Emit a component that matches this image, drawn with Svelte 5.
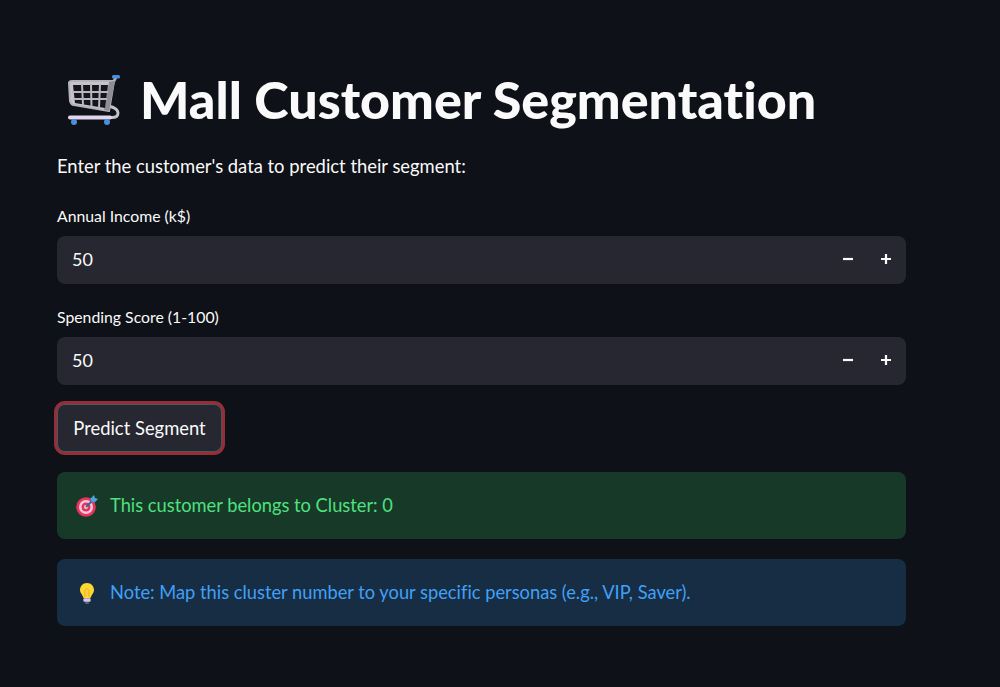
<script>
  const inputs = [
    { label: 'Annual Income (k$)', value: 50 },
    { label: 'Spending Score (1-100)', value: 50 }
  ];
</script>

<main class="page">
  <h1>
    <svg class="cart" viewBox="0 0 58 54" width="58" height="54" aria-hidden="true">
      <path d="M49 11 L52 5" stroke="#a9a7ae" stroke-width="3" fill="none"/>
      <rect x="48" y="3" width="8" height="3.500" rx="1.500" fill="#4a90d9"/>
      <path d="M44 34 Q54 36 54 41 Q54 46 47 45.500" stroke="#c4c2c8" stroke-width="3" fill="none"/>
      <path d="M5 11 Q5 9 8 9 L50 9 L45 39 L10 33 Q7 33 6 29 Z" fill="#c6c4ca" stroke="#b5b3ba" stroke-width="2" stroke-linejoin="round"/>
      <path d="M45 10 L51 9 L45 39 L40 38 Z" fill="#8e8c94"/>
      <path d="M9 13 L44 13 L41 36 L11 31 Z" fill="#15151c"/>
      <path d="M18 12 L19 33 M27 12 L27.500 35 M36 12 L35 36 M8 20 L44 20 M9 27 L43 27" stroke="#b9b7be" stroke-width="2" fill="none"/>
      <rect x="4" y="43.500" width="44" height="4" rx="2" fill="#e2d6ec"/>
      <circle cx="10" cy="50" r="3" fill="#4a90d9"/>
      <circle cx="43" cy="50" r="3" fill="#4a90d9"/>
    </svg>
    <span>Mall Customer Segmentation</span>
  </h1>

  <p class="intro">Enter the customer's data to predict their segment:</p>

  {#each inputs as input}
    <div class="field">
      <div class="label">{input.label}</div>
      <div class="number-input">
        <span class="value">{input.value}</span>
        <div class="steps">
          <svg viewBox="0 0 12 12" width="12" height="12" aria-hidden="true"><path d="M1 6H11" stroke="#fafafa" stroke-width="2.200"/></svg>
          <svg viewBox="0 0 12 12" width="12" height="12" aria-hidden="true"><path d="M1 6H11M6 1V11" stroke="#fafafa" stroke-width="2.200"/></svg>
        </div>
      </div>
    </div>
  {/each}

  <button class="predict">Predict Segment</button>

  <div class="alert success">
    <svg viewBox="0 0 22 22" width="22" height="22" aria-hidden="true">
      <circle cx="10" cy="12" r="9.800" fill="#e8325f"/>
      <circle cx="10" cy="12" r="7" fill="#f9c9d8"/>
      <circle cx="10" cy="12" r="4.500" fill="#e8325f"/>
      <circle cx="10" cy="12" r="2" fill="#f9c9d8"/>
      <path d="M10 12L18 4" stroke="#2f6aa8" stroke-width="2"/>
      <path d="M14.500 3.500L18 0L19 3L22 4L18.500 7.500L15.500 6.500Z" fill="#4aa3e0"/>
    </svg>
    <span>This customer belongs to Cluster: 0</span>
  </div>

  <div class="alert info">
    <svg viewBox="0 0 22 22" width="22" height="22" aria-hidden="true">
      <path d="M11 1C6.500 1 4 4.500 4 8C4 11 6.500 12.500 7.500 16H14.500C15.500 12.500 18 11 18 8C18 4.500 15.500 1 11 1Z" fill="#fdd835"/>
      <path d="M9 15C9 11 8 9 9.500 7.500C11 6 13 7.500 13 9C13 11 13 13 13 15" fill="none" stroke="#f5a623" stroke-width="1"/>
      <rect x="7.500" y="16" width="7" height="4" rx="1" fill="#b5a6c9"/>
      <path d="M7.500 18H14.500" stroke="#efeaf5" stroke-width="1"/>
      <rect x="9" y="20" width="4" height="2" rx="1" fill="#6a5a80"/>
    </svg>
    <span>Note: Map this cluster number to your specific personas (e.g., VIP, Saver).</span>
  </div>
</main>

<style>
  :global(body) {
    background: #0e1117;
  }

  .page {
    box-sizing: border-box;
    width: 906px;
    height: 687px;
    padding: 62px 0 0 57px;
    color: #fafafa;
    font-family: "Lato", "Noto Sans", sans-serif;
    font-variant-ligatures: none;
    overflow: hidden;
  }

  h1 {
    display: flex;
    align-items: center;
    gap: 18px;
    margin: 0;
    padding-left: 7px;
    height: 74px;
    font-size: 52px;
    font-weight: 900;
    line-height: 74px;
    white-space: nowrap;
  }

  .cart {
    flex: none;
  }

  .intro {
    margin: 18px 0 0;
    font-size: 18.4px;
    line-height: 24px;
  }

  .field {
    margin-top: 28px;
  }

  .field + .field {
    margin-top: 23px;
  }

  .label {
    font-size: 15.8px;
    line-height: 20px;
    margin-bottom: 10px;
  }

  .number-input {
    display: flex;
    align-items: center;
    justify-content: space-between;
    box-sizing: border-box;
    height: 48px;
    padding: 0 14px 0 15px;
    background: #262730;
    border-radius: 8px;
    font-size: 18px;
  }

  .value {
    margin-bottom: 2px;
  }

  .steps {
    display: flex;
    gap: 26px;
    margin-bottom: 2px;
  }

  .predict {
    display: block;
    box-sizing: border-box;
    width: 165px;
    height: 48px;
    margin: 19px 0 0;
    background: #262730;
    color: #fafafa;
    border: 1px solid #4a5560;
    border-radius: 8px;
    box-shadow: 0 0 0 3px #962e37;
    font-family: inherit;
    font-size: 18.4px;
    padding: 0;
  }

  .alert {
    display: flex;
    align-items: center;
    gap: 12px;
    box-sizing: border-box;
    height: 67px;
    padding: 0 19px;
    border-radius: 8px;
    font-size: 18.3px;
  }

  .alert span {
    margin-bottom: 2px;
  }

  .success {
    margin-top: 20px;
    background: #173928;
    color: #4fe07f;
  }

  .info {
    margin-top: 20px;
    background: #172d43;
    color: #40a0f8;
  }
</style>
